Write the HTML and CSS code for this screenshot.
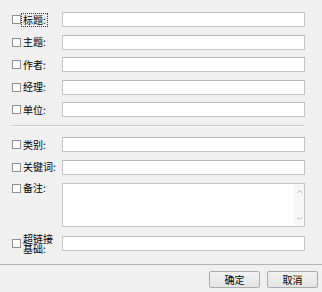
FILE: index.html
```html
<!DOCTYPE html>
<html>
<head>
<meta charset="utf-8">
<link rel="stylesheet" href="styles.css">
</head>
<body>
<div class="dialog">
  <div class="form">
    <div class="group">
      <div class="row"><span class="cb"></span><span class="label focus">标题:</span><span class="input"></span></div>
      <div class="row"><span class="cb"></span><span class="label">主题:</span><span class="input"></span></div>
      <div class="row"><span class="cb"></span><span class="label">作者:</span><span class="input"></span></div>
      <div class="row"><span class="cb"></span><span class="label">经理:</span><span class="input"></span></div>
      <div class="row"><span class="cb"></span><span class="label">单位:</span><span class="input"></span></div>
    </div>
    <div class="sep"></div>
    <div class="group group2">
      <div class="row"><span class="cb"></span><span class="label">类别:</span><span class="input"></span></div>
      <div class="row"><span class="cb"></span><span class="label">关键词:</span><span class="input"></span></div>
      <div class="row row-top"><span class="cb"></span><span class="label">备注:</span>
        <span class="textarea">
          <span class="sb">
            <svg width="7" height="5" viewBox="0 0 7 5"><path d="M1 4 L3.5 1.5 L6 4" fill="none" stroke="#b9b9b9" stroke-width="1"/></svg>
            <svg width="7" height="5" viewBox="0 0 7 5"><path d="M1 1 L3.5 3.5 L6 1" fill="none" stroke="#b9b9b9" stroke-width="1"/></svg>
          </span>
        </span>
      </div>
      <div class="row row-last"><span class="cb"></span><span class="label wrap">超链接基础:</span><span class="input"></span></div>
    </div>
  </div>
  <div class="footer">
    <button class="btn">确定</button>
    <button class="btn">取消</button>
  </div>
</div>
</body>
</html>
```
FILE: styles.css
```css
html, body {
  margin: 0;
  padding: 0;
  background: #f0f0f0;
}
body {
  width: 322px;
  height: 292px;
  overflow: hidden;
  font-family: "Noto Sans CJK SC", "Noto Sans", sans-serif;
  font-size: 10px;
  color: #000;
}
.dialog {
  display: flex;
  flex-direction: column;
  height: 292px;
}
.form {
  padding: 12px 17px 0 12px;
  flex: 1;
}
.group {
  display: flex;
  flex-direction: column;
  gap: 7.5px;
}
.row {
  display: grid;
  grid-template-columns: 9px 37px 1fr;
  column-gap: 2px;
  align-items: center;
}
.row-top {
  align-items: start;
}
.cb {
  width: 7px;
  height: 7px;
  border: 1px solid #8e8f8f;
  background: #fff;
  box-sizing: content-box;
}
.row-top .cb {
  margin-top: 1px;
}
.label {
  line-height: 12px;
  white-space: nowrap;
  justify-self: start;
}
.label.focus {
  outline: 1px dotted #333;
  outline-offset: 0;
  padding: 0 1px;
  margin-left: -1px;
}
.label.wrap {
  white-space: normal;
  width: 32px;
  line-height: 10px;
}
.row-top .label {
  margin-top: -1px;
}
.input {
  display: block;
  height: 13px;
  border: 1px solid #c4c4c4;
  border-top-color: #b8b8b8;
  background: #fff;
}
.sep {
  margin: 8px 0 10px 0;
  height: 0;
  border-top: 1px solid #c9c9c9;
  border-bottom: 1px solid #fbfbfb;
}
.group2 .row-top {
  margin-top: 1px;
}
.textarea {
  display: flex;
  justify-content: flex-end;
  height: 42px;
  border: 1px solid #c4c4c4;
  background: #fff;
}
.sb {
  width: 10px;
  background: #f7f7f7;
  display: flex;
  flex-direction: column;
  align-items: center;
  justify-content: space-between;
  padding: 5px 0 5px 0;
}
.sb svg {
  display: block;
}
.row-last {
  margin-top: -1px;
}
.footer {
  height: 21px;
  border-top: 1px solid #b4b4b4;
  display: flex;
  justify-content: flex-end;
  align-items: flex-start;
  gap: 7px;
  padding: 6px 4px 0 0;
  box-sizing: content-box;
}
.btn {
  width: 51px;
  height: 17px;
  padding: 0;
  border: 1px solid #acacac;
  border-radius: 2px;
  background: linear-gradient(#f2f2f2, #e3e3e3);
  font-family: "Noto Sans CJK SC", "Noto Sans", sans-serif;
  font-size: 10px;
  line-height: 15px;
  color: #000;
}
```
